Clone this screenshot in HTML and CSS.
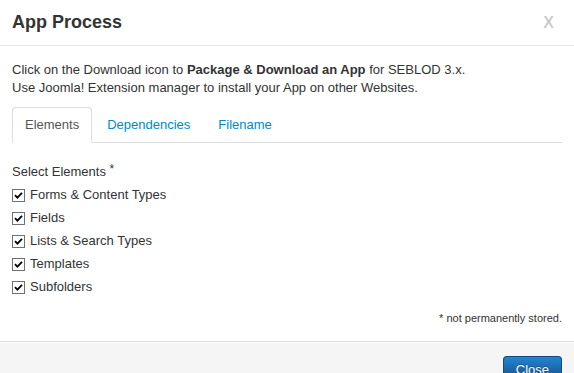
FILE: index.html
```html
<!DOCTYPE html>
<html lang="en">
<head>
  <meta charset="UTF-8">
  <title>App Process</title>
  <link rel="stylesheet" href="styles.css">
</head>
<body>
  <div class="modal">
    <div class="modal-header">
      <h3>App Process</h3>
      <button type="button" class="close">X</button>
    </div>

    <div class="modal-body">
      <p>Click on the Download icon to <strong>Package &amp; Download an App</strong> for SEBLOD 3.x.<br>
      Use Joomla! Extension manager to install your App on other Websites.</p>

      <ul class="nav-tabs">
        <li class="active"><a href="#elements">Elements</a></li>
        <li><a href="#dependencies">Dependencies</a></li>
        <li><a href="#filename">Filename</a></li>
      </ul>

      <div class="tab-pane">
        <div class="field-label">Select Elements <span class="star">*</span></div>
        <label class="check-row"><span class="check"><svg width="13" height="13" viewBox="0 0 13 13"><rect x="0.5" y="0.5" width="12" height="12" fill="#fff" stroke="#707070"/><polyline points="3,6.2 5.4,8.6 10,3.8" fill="none" stroke="#000" stroke-width="1.8"/></svg></span>Forms &amp; Content Types</label>
        <label class="check-row"><span class="check"><svg width="13" height="13" viewBox="0 0 13 13"><rect x="0.5" y="0.5" width="12" height="12" fill="#fff" stroke="#707070"/><polyline points="3,6.2 5.4,8.6 10,3.8" fill="none" stroke="#000" stroke-width="1.8"/></svg></span>Fields</label>
        <label class="check-row"><span class="check"><svg width="13" height="13" viewBox="0 0 13 13"><rect x="0.5" y="0.5" width="12" height="12" fill="#fff" stroke="#707070"/><polyline points="3,6.2 5.4,8.6 10,3.8" fill="none" stroke="#000" stroke-width="1.8"/></svg></span>Lists &amp; Search Types</label>
        <label class="check-row"><span class="check"><svg width="13" height="13" viewBox="0 0 13 13"><rect x="0.5" y="0.5" width="12" height="12" fill="#fff" stroke="#707070"/><polyline points="3,6.2 5.4,8.6 10,3.8" fill="none" stroke="#000" stroke-width="1.8"/></svg></span>Templates</label>
        <label class="check-row"><span class="check"><svg width="13" height="13" viewBox="0 0 13 13"><rect x="0.5" y="0.5" width="12" height="12" fill="#fff" stroke="#707070"/><polyline points="3,6.2 5.4,8.6 10,3.8" fill="none" stroke="#000" stroke-width="1.8"/></svg></span>Subfolders</label>
      </div>

      <div class="note">* not permanently stored.</div>
    </div>

    <div class="modal-footer">
      <button type="button" class="btn btn-primary">Close</button>
    </div>
  </div>
</body>
</html>
```

FILE: styles.css
```css
body {
  margin: 0;
  font-family: "Liberation Sans", Arial, sans-serif;
  font-size: 13px;
  line-height: 18px;
  color: #333;
  background: #fff;
}

.modal {
  height: 373px;
  overflow: hidden;
}

.modal-header {
  display: flex;
  justify-content: space-between;
  align-items: center;
  padding: 9px 12px;
  border-bottom: 1px solid #e5e5e5;
}

.modal-header h3 {
  margin: 0;
  font-size: 18px;
  line-height: 27px;
  font-weight: bold;
  color: #333;
}

.close {
  padding: 0;
  margin: 1px 8px 0 0;
  border: none;
  background: none;
  font-family: "Liberation Sans", Arial, sans-serif;
  font-size: 16px;
  font-weight: bold;
  line-height: 18px;
  color: #000;
  opacity: 0.2;
  cursor: pointer;
}

.modal-body {
  padding: 15px 12px 15px;
}

.modal-body p {
  margin: 0 0 10px;
}

.nav-tabs {
  display: flex;
  list-style: none;
  margin: 0 0 17px;
  padding: 0;
  border-bottom: 1px solid #ddd;
}

.nav-tabs li {
  margin-bottom: -1px;
  margin-right: 2px;
}

.nav-tabs a {
  display: block;
  padding: 8px 12px;
  line-height: 18px;
  border: 1px solid transparent;
  border-radius: 4px 4px 0 0;
  color: #08c;
  text-decoration: none;
}

.nav-tabs .active a {
  color: #555;
  background: #fff;
  border-color: #ddd #ddd transparent;
}

.field-label {
  margin-bottom: 2px;
}

.star {
  vertical-align: 3px;
  font-size: 12px;
}

.check-row {
  display: flex;
  align-items: center;
  height: 23px;
}

.check {
  display: flex;
  width: 13px;
  height: 13px;
  margin: 2px 5px 0 0;
}

.note {
  margin-top: 12px;
  text-align: right;
  font-size: 11px;
  line-height: 16px;
}

.modal-footer {
  display: flex;
  justify-content: flex-end;
  padding: 14px 12px 15px;
  background: #f5f5f5;
  border-top: 1px solid #ddd;
  box-shadow: inset 0 1px 0 #fff;
}

.btn {
  padding: 4px 12px;
  font-family: "Liberation Sans", Arial, sans-serif;
  font-size: 13px;
  line-height: 18px;
  border-radius: 4px;
  cursor: pointer;
}

.btn-primary {
  color: #fff;
  background-color: #1d6cb0;
  background-image: linear-gradient(to bottom, #2384d3, #15497c);
  border: 1px solid #15497c;
  border-bottom-color: #0a223b;
  text-shadow: 0 -1px 0 rgba(0, 0, 0, 0.25);
}
```
